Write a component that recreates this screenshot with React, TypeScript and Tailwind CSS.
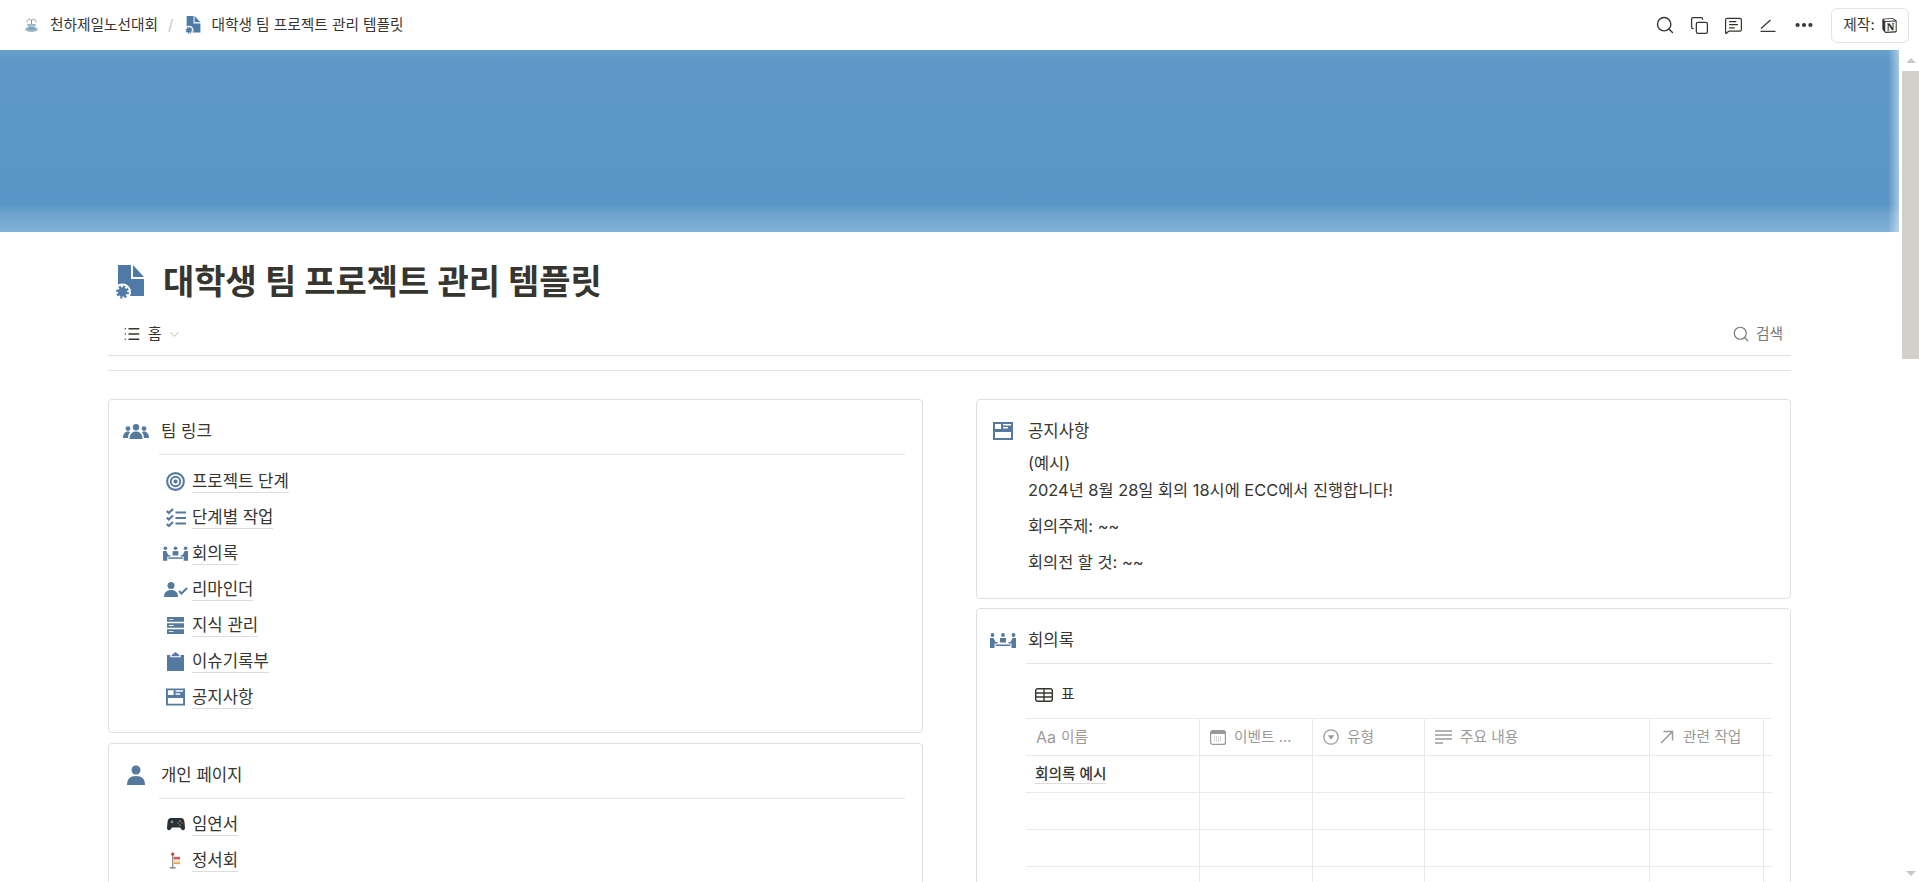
import { Search, Copy, MessageSquareText, MoreHorizontal, ChevronDown, List } from "lucide-react";
import { SiNotion } from "react-icons/si";
import type { ReactNode } from "react";

const BLUE = "#55799f";

function PageGearIcon({ className }: { className?: string }) {
  return (
    <svg viewBox="0 0 28 34" className={className}>
      <path fill="#4f7aa8" d="M2 0h13v14h13v17H2z" />
      <path fill="#4f7aa8" d="M17 0l11 12H17z" />
      <circle cx="6.500" cy="27" r="8.500" fill="#fff" />
      <circle cx="6.500" cy="27" r="4.700" fill="#4f7aa8" />
      <circle cx="6.500" cy="27" r="5.400" fill="none" stroke="#4f7aa8" strokeWidth="2.200" strokeDasharray="2.200 2" />
      <circle cx="6.500" cy="27" r="1.500" fill="#4f7aa8" />
    </svg>
  );
}

function FountainIcon() {
  return (
    <svg viewBox="0 0 16 18" className="h-[16px] w-[15px]">
      <path d="M8 8V3M8 4C5 1 3 3 3 6M8 4c3-3 5-1 5 2" fill="none" stroke="#6f8fa8" strokeWidth="1" />
      <path d="M3 8h10l-1 3H4z" fill="#9db9cc" />
      <ellipse cx="8" cy="14" rx="7" ry="3" fill="#a9b4bc" />
      <ellipse cx="8" cy="13" rx="4.500" ry="1.400" fill="#6ea3cc" />
    </svg>
  );
}

function TeamIcon() {
  return (
    <svg viewBox="0 0 26 15" className="h-[15px] w-[26px]" fill={BLUE}>
      <circle cx="13" cy="3.200" r="3.200" />
      <circle cx="5" cy="4.600" r="2.400" />
      <circle cx="21" cy="4.600" r="2.400" />
      <path d="M6.500 15c0-5 3-7.500 6.500-7.500s6.500 2.500 6.500 7.500z" />
      <path d="M0 14c0-4 2-6.500 5-6.500 1 0 1.700.3 2.200.6C5.800 9.800 5 12 5 14zM26 14c0-4-2-6.500-5-6.500-1 0-1.700.3-2.200.6 1.400 1.700 2.200 3.900 2.200 5.900z" />
    </svg>
  );
}

function TargetIcon() {
  return (
    <svg viewBox="0 0 20 20" className="h-[19px] w-[19px]" fill="none" stroke={BLUE}>
      <circle cx="10" cy="10" r="8.800" strokeWidth="2.200" />
      <circle cx="10" cy="10" r="5" strokeWidth="2" />
      <circle cx="10" cy="10" r="2.200" fill={BLUE} stroke="none" />
    </svg>
  );
}

function CheckListIcon() {
  return (
    <svg viewBox="0 0 20 19" className="h-[19px] w-[20px]" fill="none" stroke={BLUE} strokeWidth="2.200">
      <path d="M.8 3l2 2L7 1M.8 9.500l2 2L7 7.500M.8 16l2 2L7 14" />
      <path d="M9.500 4.500H20M9.500 10H20M9.500 15.500H20" />
    </svg>
  );
}

function MeetingIcon({ className }: { className?: string }) {
  return (
    <svg viewBox="0 0 26 15" className={className ?? "h-[15px] w-[25px]"} fill={BLUE}>
      <circle cx="2.500" cy="2" r="1.900" />
      <circle cx="13" cy="2" r="1.900" />
      <circle cx="23.500" cy="2" r="1.900" />
      <path d="M0 5h3.500l2 4h2v1.500H4.500V15H0z" />
      <path d="M26 5h-3.500l-2 4h-2v1.500h3V15H26z" />
      <path d="M10 5h6v4.500h-6z" />
      <path d="M5.500 11.500h15V13h-15z" />
    </svg>
  );
}

function PersonCheckIcon() {
  return (
    <svg viewBox="0 0 24 15" className="h-[15px] w-[24px]" fill={BLUE}>
      <circle cx="7" cy="3.500" r="3.500" />
      <path d="M0 15c0-5 3-7 7-7s7 2 7 7z" />
      <path d="M15 9l2.500 2.500L23 6" fill="none" stroke={BLUE} strokeWidth="2" />
    </svg>
  );
}

function ServerIcon() {
  return (
    <svg viewBox="0 0 18 18" className="h-[17px] w-[17px]">
      <path fill={BLUE} d="M0 0h18v5H0zM0 6.500h18v5H0zM0 13h18v5H0z" />
      <path fill="#fff" d="M2 2h5v1H2zM2 8.500h5v1H2zM2 15h5v1H2z" />
    </svg>
  );
}

function ClipboardIcon() {
  return (
    <svg viewBox="0 0 18 20" className="h-[19px] w-[17px]" fill={BLUE}>
      <path d="M0 3h3.500v2.500h11V3H18v17H0z" />
      <path d="M5 3l4-3 4 3v1.500H5z" />
    </svg>
  );
}

function BoardIcon({ className }: { className?: string }) {
  return (
    <svg viewBox="0 0 20 18" className={className ?? "h-[18px] w-[19px]"}>
      <path fill={BLUE} fillRule="evenodd" d="M0 0h20v18H0zM2 2v5h6V2zM2 10v6h16v-6zM10 2v1.500h8V2zM10 5v1.500h5V5z" />
    </svg>
  );
}

function PersonIcon() {
  return (
    <svg viewBox="0 0 18 20" className="h-[20px] w-[18px]" fill={BLUE}>
      <circle cx="9" cy="5" r="4.500" />
      <path d="M0 20c0-6 3-9 9-9s9 3 9 9z" />
    </svg>
  );
}

function GamepadIcon() {
  return (
    <svg viewBox="0 0 18 13" className="h-[13px] w-[18px]">
      <path fill="#2b2f36" d="M4 0h10c2 0 3 1 3.500 4l.5 6c0 2-2 3-3.500 1.500L13 9.500H5l-1.500 2C2 13 0 12 0 10l.5-6C1 1 2 0 4 0z" />
      <circle cx="5" cy="4" r="1.400" fill="#7f8a95" />
      <circle cx="13" cy="3" r=".8" fill="#e7c64a" />
      <circle cx="15" cy="5" r=".8" fill="#d8534a" />
      <circle cx="11" cy="5" r=".8" fill="#5b9bd5" />
      <circle cx="13" cy="7" r=".8" fill="#69b36a" />
    </svg>
  );
}

function SignIcon() {
  return (
    <svg viewBox="0 0 12 18" className="h-[17px] w-[11px]">
      <path d="M3 2v14" stroke="#77777a" strokeWidth="1.200" />
      <path d="M0 17h6" stroke="#77777a" strokeWidth="1.500" />
      <circle cx="3" cy="2" r="1.800" fill="#c73b3f" />
      <rect x="4" y="5" width="7" height="3" fill="#d95b55" />
      <rect x="4" y="8" width="7" height="3" fill="#efe3d0" />
      <rect x="4" y="11" width="7" height="2" fill="#eaa64d" />
    </svg>
  );
}

function PenIcon() {
  return (
    <svg viewBox="0 0 16 13" className="h-[13px] w-[16px]" fill="none" stroke="#3b3a36" strokeWidth="1.300">
      <path d="M1 9.500L10.500 1M.5 12.500h15" />
    </svg>
  );
}

function TableIcon() {
  return (
    <svg viewBox="0 0 18 14" className="h-[14px] w-[18px]" fill="none" stroke="#37352f" strokeWidth="1.400">
      <rect x=".7" y=".7" width="16.600" height="12.600" rx="2" />
      <path d="M1 5h16M1 9h16M9 1v12" />
    </svg>
  );
}

function CalendarIcon() {
  return (
    <svg viewBox="0 0 16 15" className="h-[15px] w-[16px]">
      <rect x=".6" y=".6" width="14.800" height="13.800" rx="2" fill="none" stroke="#9b9a97" strokeWidth="1.200" />
      <path d="M1 1h14v3H1z" fill="#9b9a97" />
      <path d="M4 7h8M4 9h8M4 11h8" stroke="#b5b4b1" strokeWidth="1" strokeDasharray="1 1" />
    </svg>
  );
}

function SelectIcon() {
  return (
    <svg viewBox="0 0 16 16" className="h-[16px] w-[16px]">
      <circle cx="8" cy="8" r="7.200" fill="none" stroke="#9b9a97" strokeWidth="1.300" />
      <path d="M4.800 6.200h6.400L8 10.800z" fill="#9b9a97" />
    </svg>
  );
}

function TextLinesIcon() {
  return (
    <svg viewBox="0 0 17 14" className="h-[14px] w-[17px]" fill="none" stroke="#9b9a97" strokeWidth="1.300">
      <path d="M0 1h17M0 5h17M0 9h17M0 13h8" />
    </svg>
  );
}

function RelationIcon() {
  return (
    <svg viewBox="0 0 14 14" className="h-[14px] w-[14px]" fill="none" stroke="#9b9a97" strokeWidth="1.500">
      <path d="M1 13L12.500 1.500M3.500 1.500h9v9" />
    </svg>
  );
}

function LinkRow({ icon, label }: { icon: ReactNode; label: string }) {
  return (
    <div className="flex h-[36px] items-center">
      <div className="flex w-[33px] justify-center">{icon}</div>
      <span className="border-b border-[#dcdcda] leading-[22px]">{label}</span>
    </div>
  );
}

function CardHeading({ icon, title, width }: { icon: ReactNode; title: string; width: string }) {
  return (
    <div className="flex items-center">
      <div className={`flex justify-center ${width}`}>{icon}</div>
      <span className="leading-[24px]">{title}</span>
    </div>
  );
}

function HeadCell({ icon, label, className, gap }: { icon: ReactNode; label: string; className: string; gap: string }) {
  return (
    <div className={`flex items-center border-r border-[#e9e9e7] pl-[10px] text-[14.700px] leading-[20px] text-[#9b9a97] ${className}`}>
      {icon}
      <span className={`-mt-[1px] ${gap}`}>{label}</span>
    </div>
  );
}

function TableRow({ name }: { name?: string }) {
  const cols = ["w-[174px]", "w-[113px]", "w-[112px]", "w-[225px]", "w-[114px]", "w-[8px]"];
  return (
    <div className="flex h-[37px] border-b border-[#e9e9e7]">
      {cols.map((w, i) => (
        <div key={w + i} className={`flex items-center ${w} ${i < 5 ? "border-r border-[#e9e9e7] px-[9px]" : ""}`}>
          {i === 0 && name ? (
            <span className="border-b border-[#dcdcda] text-[14.700px] font-medium leading-[18px]">{name}</span>
          ) : null}
        </div>
      ))}
    </div>
  );
}

export default function App() {
  return (
    <div className="flex h-[882px] w-[1919px] flex-col overflow-hidden bg-white text-[16.700px] text-[#37352f] font-['Inter','Noto_Sans_CJK_KR',sans-serif]">
      <header className="flex h-[50px] shrink-0 items-center justify-between pl-[24px] pr-[10px] text-[14.700px]">
        <div className="flex items-center">
          <FountainIcon />
          <span className="ml-[11px]">천하제일노선대회</span>
          <span className="ml-[10px] mr-[12px] text-[#c4c3c0]">/</span>
          <PageGearIcon className="h-[18px] w-[16px]" />
          <span className="ml-[10px]">대학생 팀 프로젝트 관리 템플릿</span>
        </div>
        <div className="flex items-center">
          <Search size={20} strokeWidth={1.700} />
          <Copy size={19} strokeWidth={1.600} className="ml-[15px]" />
          <MessageSquareText size={19} strokeWidth={1.500} className="ml-[15px]" />
          <div className="ml-[17px]"><PenIcon /></div>
          <MoreHorizontal size={22} strokeWidth={2.600} className="ml-[17px]" />
          <div className="ml-[16px] flex h-[35px] w-[78px] items-center justify-center gap-[7px] rounded-[6px] border border-[#e3e3e1]">
            <span>제작:</span>
            <SiNotion size={15} />
          </div>
        </div>
      </header>
      <div className="flex min-h-0 flex-1">
        <main className="w-[1902px] shrink-0 overflow-hidden">
          <div className="h-[182px] w-[1899px] bg-[linear-gradient(to_right,transparent_1888px,rgba(255,255,255,.45)_1899px),linear-gradient(to_bottom,#659ecb_0%,#5d98c8_8%,#5995c6_85%,#6da3ce_90%,#82b1d7_100%)]" />
          <div className="ml-[108px] w-[1683px]">
            <div className="flex h-[92px] items-center pl-[8px] pt-[8px]">
              <PageGearIcon className="h-[34px] w-[28px]" />
              <h1 className="ml-[19px] text-[34px] font-bold leading-[44px]">대학생 팀 프로젝트 관리 템플릿</h1>
            </div>
            <div className="flex h-[31px] items-start justify-between">
              <div className="flex items-center pl-[15px] text-[14.700px] leading-[20px]">
                <List size={18} strokeWidth={1.800} />
                <span className="ml-[7px]">홈</span>
                <ChevronDown size={15} strokeWidth={1.500} className="ml-[5px] text-[#b5b4b1]" />
              </div>
              <div className="flex items-center pr-[8px] text-[14.700px] leading-[20px] text-[#787774]">
                <Search size={18} strokeWidth={1.500} />
                <span className="ml-[6px]">검색</span>
              </div>
            </div>
            <div className="h-[16px] border-y border-[#e3e3e1]" />
            <div className="mt-[28px] grid grid-cols-[815px_815px] gap-x-[53px]">
              <div className="flex flex-col gap-[10px]">
                <section className="h-[334px] rounded-[4px] border border-[#dfdfdd] pt-[19px]">
                  <CardHeading icon={<TeamIcon />} title="팀 링크" width="w-[53px] mr-[-1px]" />
                  <div className="ml-[50px] mr-[17px] mt-[11px] border-t border-[#e3e3e1]" />
                  <div className="ml-[50px] mt-[8px]">
                    <LinkRow icon={<TargetIcon />} label="프로젝트 단계" />
                    <LinkRow icon={<CheckListIcon />} label="단계별 작업" />
                    <LinkRow icon={<MeetingIcon />} label="회의록" />
                    <LinkRow icon={<PersonCheckIcon />} label="리마인더" />
                    <LinkRow icon={<ServerIcon />} label="지식 관리" />
                    <LinkRow icon={<ClipboardIcon />} label="이슈기록부" />
                    <LinkRow icon={<BoardIcon />} label="공지사항" />
                  </div>
                </section>
                <section className="h-[200px] rounded-[4px] border border-[#dfdfdd] pt-[19px]">
                  <CardHeading icon={<PersonIcon />} title="개인 페이지" width="w-[53px] mr-[-1px]" />
                  <div className="ml-[50px] mr-[17px] mt-[11px] border-t border-[#e3e3e1]" />
                  <div className="ml-[50px] mt-[7px]">
                    <LinkRow icon={<GamepadIcon />} label="임연서" />
                    <LinkRow icon={<SignIcon />} label="정서회" />
                  </div>
                </section>
              </div>
              <div className="flex flex-col gap-[9px]">
                <section className="h-[200px] rounded-[4px] border border-[#dfdfdd] pt-[19px]">
                  <CardHeading icon={<BoardIcon className="h-[18px] w-[20px]" />} title="공지사항" width="w-[51px]" />
                  <div className="ml-[51px] mt-[7px] text-[16.400px] leading-[27px]">
                    <p>(예시)</p>
                    <p>2024년 8월 28일 회의 18시에 ECC에서 진행합니다!</p>
                    <p className="mt-[9px]">회의주제: ~~</p>
                    <p className="mt-[9px]">회의전 할 것: ~~</p>
                  </div>
                </section>
                <section className="h-[300px] rounded-[4px] border border-[#dfdfdd] pt-[19px]">
                  <CardHeading icon={<MeetingIcon className="h-[15px] w-[26px]" />} title="회의록" width="w-[51px]" />
                  <div className="ml-[49px] mr-[18px] mt-[11px] border-t border-[#e3e3e1]" />
                  <div className="ml-[49px] flex h-[54px] items-center pl-[9px] pt-[7px] text-[14.700px]">
                    <TableIcon />
                    <span className="ml-[8px]">표</span>
                  </div>
                  <div className="ml-[49px] w-[746px] border-t border-[#e9e9e7]">
                    <div className="flex h-[37px] border-b border-[#e9e9e7]">
                      <HeadCell className="w-[174px]" gap="ml-[5px]" icon={<span className="text-[16px] leading-none">Aa</span>} label="이름" />
                      <HeadCell className="w-[113px]" gap="ml-[8px]" icon={<CalendarIcon />} label="이벤트 ..." />
                      <HeadCell className="w-[112px]" gap="ml-[8px]" icon={<SelectIcon />} label="유형" />
                      <HeadCell className="w-[225px]" gap="ml-[8px]" icon={<TextLinesIcon />} label="주요 내용" />
                      <HeadCell className="w-[114px]" gap="ml-[9px]" icon={<RelationIcon />} label="관련 작업" />
                      <div className="w-[8px]" />
                    </div>
                    <TableRow name="회의록 예시" />
                    <TableRow />
                    <TableRow />
                    <TableRow />
                  </div>
                </section>
              </div>
            </div>
          </div>
        </main>
        <div className="flex w-[17px] shrink-0 flex-col items-center">
          <div className="flex h-[21px] w-full items-center justify-center">
            <div className="h-0 w-0 border-x-[5px] border-b-[5px] border-x-transparent border-b-[#c9c8c3]" />
          </div>
          <div className="h-[288px] w-full bg-[#d0cfca]" />
          <div className="flex-1" />
          <div className="flex h-[17px] w-full items-center justify-center">
            <div className="h-0 w-0 border-x-[5px] border-t-[5px] border-x-transparent border-t-[#c9c8c3]" />
          </div>
        </div>
      </div>
    </div>
  );
}
